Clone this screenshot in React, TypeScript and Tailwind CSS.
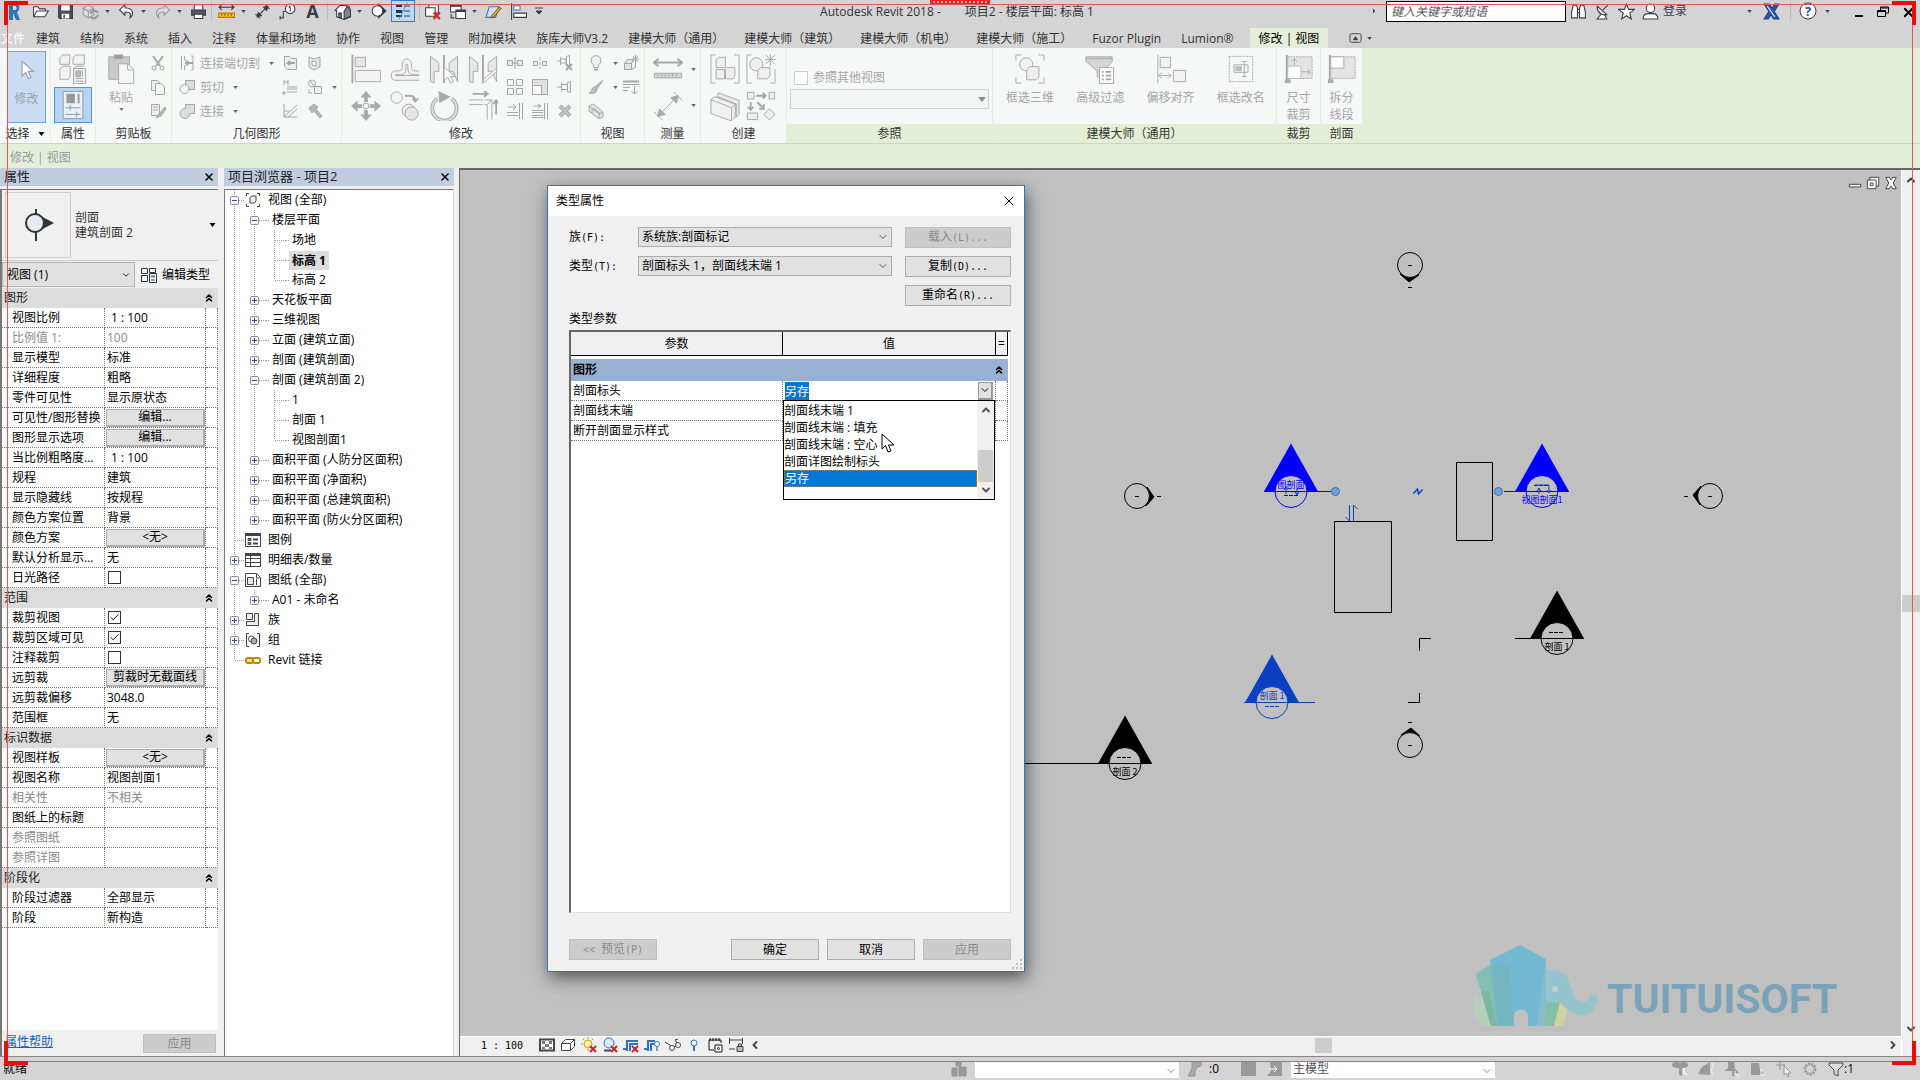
import type { ReactNode } from "react";
import { Check, ChevronDown, ChevronLeft, ChevronRight, ChevronUp, ChevronsUp, X } from "lucide-react";

type IconProps = { children: ReactNode; box?: number; className?: string };

function Icon({ children, box = 16, className = "size-4" }: IconProps) {
  return (
    <svg
      aria-hidden="true"
      className={`shrink-0 ${className}`}
      fill="none"
      stroke="currentColor"
      viewBox={`0 0 ${box} ${box}`}
    >
      {children}
    </svg>
  );
}

function Caret({ className = "h-[3px] w-[5px] text-[#444]" }: { className?: string }) {
  return (
    <svg aria-hidden="true" className={`shrink-0 ${className}`} viewBox="0 0 6 4">
      <path d="M0 0h6L3 4z" fill="currentColor" />
    </svg>
  );
}

const quick = {
  open: <><path d="M1.500 13V3.500h4l1.500 2h5.500V7.500M1.500 13l3-5.500h11L12 13z" fill="#fff" /></>,
  save: <><path d="M1.500 1.500h13v13h-12l-1-1z" fill="#4a4f5c" /><path d="M4 2h8v5H4zM4.500 10h7v4.500h-7z" fill="#fff" stroke="none" /><path d="M6 11h1.500v3H6z" fill="#4a4f5c" stroke="none" /></>,
  sync: <><path d="M1 5l5-3 5 3v6l-5 3-5-3zM1 5l5 3 5-3M6 8v6" fill="#ddd" /><path d="M8 10a4 4 0 017-1M15 11a4 4 0 01-7 2" strokeWidth="2" /></>,
  undo: <path d="M6.500 1.500L1.500 6.500l5 5v-3c4 0 6 .5 5 5.500 3-3 4-9-5-9.500z" fill="#fff" />,
  redo: <path d="M9.500 1.500l5 5-5 5v-3c-4 0-6 .5-5 5.500-3-3-4-9 5-9.500z" fill="#ddd" />,
  print: <><path d="M4 6V1.500h8V6" fill="#fff" /><path d="M1.500 6.500h13v5h-13z" fill="#555b66" /><path d="M4 10.500h8v4H4z" fill="#fff" /></>,
  measure: <><path d="M1 4h14M3.500 1.500L1 4l2.500 2.500M12.500 1.500L15 4l-2.500 2.500" stroke="#333" /><path d="M.5 9.500h15v4H.5z" fill="#ffc21a" stroke="#b97a00" /><path d="M3.500 10v2M6.500 10v2M9.500 10v2M12.500 10v2" stroke="#7a5200" /></>,
  dim: <><path d="M3 13L13 3M1.500 10.500l4 4M10.500 1.500l4 4" /><path d="M3 13l1-4 3 3zM13 3L9 4l3 3z" fill="currentColor" /></>,
  tag: <><circle cx="10.500" cy="5.500" fill="#fff" r="4.500" /><path d="M10.500 3v5M9 4l1.500-1M1 14h3V8h2M1 12v3.500" /></>,
  house: <><path d="M1 7l5-5 8 1 1.500 4v6l-6 2.500L2.500 13V7z" fill="#fff" /><path d="M9.500 8v7l6-2.500V7l-3-4z" fill="#7d8590" /><path d="M4.500 9.500h2.500v4.500l-2.500-.5z" fill="#4f7fc0" /></>,
  section: <><path d="M8 1l7 6.500L8 14z" fill="#30353f" /><circle cx="7" cy="7.500" fill="#fff" r="5" /></>,
  thin: <><path d="M1 2h6v2H1zM1 7h6v3H1zM1 12h6v2H1z" fill="#2b3440" stroke="none" /><path d="M9 3h6M9 8h6M9 13h6" /><path d="M12 0L4 16" stroke="#3c8be0" /></>,
  closeHidden: <><path d="M4.500 1.500h9v8h-9z" fill="#fff" /><path d="M1.500 4.500h9v8h-9z" fill="#fff" /><path d="M9 9l6 6M15 9l-6 6" stroke="#d22" strokeWidth="2" /></>,
  windows: <><path d="M1.500 1.500h10v7h-10z" fill="#fff" /><path d="M6.500 6.500h9v8h-9z" fill="#fff" /><path d="M6.500 7.500h9M1.500 2.500h10" strokeWidth="2" /><path d="M2 10v4h3" /></>,
  pencil: <><path d="M4 3.500h9l-3 10H1z" fill="#cfe3fa" stroke="#2f73c8" /><path d="M15 5l-7 8-2 1 .5-2.500L13.500 4z" fill="#ffc84a" stroke="#8a6010" /></>,
  align: <><path d="M1.500 0v16" /><path d="M3.500 2.500h6v4h-6z" fill="#fff" stroke="#2f73c8" /><path d="M3.500 9.500h12v4h-12z" fill="#fff" /></>,
  binoculars: <path d="M3 2h3l1 3v9H1.500V9zM13 2h-3L9 5v9h5.500V9zM7 6h2v3H7z" fill="#fff" />,
  dish: <path d="M3 3c0 6 4 9 9 8zM3 3l9 8M8 7l5-5M7 10l-4 5h9l-2-4" fill="#fff" />,
  star: <path d="M8 1l2 5h5.500l-4.500 3.500 1.500 5.500L8 12l-4.500 3L5 9.500.5 6H6z" fill="#fff" />,
  user: <><circle cx="8" cy="5" fill="#fff" r="4" /><path d="M1 15c0-4 3-5 5-5h4c2 0 5 1 5 5z" fill="#fff" /></>,
  exchange: <><path d="M1 1h5l2.500 4L11 1h4l-4.500 7L15 15h-5l-2.500-4L5 15H1l4.500-7z" fill="#2a57b0" stroke="#1b3d86" /><path d="M4 3l7 10" stroke="#fff" /></>,
};

const gray = {
  cut: <><path d="M3 1l7 10M13 1L6 11" strokeWidth="2" /><circle cx="4" cy="13" r="2" /><circle cx="12" cy="13" r="2" /></>,
  copy: <><path d="M1.500 1.500h6l3 3v7h-9z" fill="#eee" /><path d="M5.500 4.500h6l3 3v8h-9z" fill="#f6f6f6" /></>,
  match: <><path d="M1.500 1.500h8v11h-8z" fill="#eee" /><path d="M3 4h5M3 7h5" /><path d="M15 4l-6 7-3 4 5-2 5-7z" fill="#bbb" /></>,
  cope: <><path d="M2.500 1v14M5.500 1v4l5 3M5.500 15v-4l5-3M14 1v14h-2M12 1h2" /><path d="M14 8H7m2-2L7 8l2 2" strokeWidth="2" /></>,
  cutGeo: <><path d="M6.500 1.500h9v9h-9z" fill="#ddd" /><circle cx="5.500" cy="10" fill="#f6f6f6" r="4.500" /></>,
  join: <path d="M6.500 1.500h9v9H11a5 5 0 11-4.500-5z" fill="#ddd" />,
  wall: <><path d="M2.500 1.500h5l2 2h5v11h-9l-3-3z" fill="#eee" /><path d="M13 8H6l2-2M6 8l2 2" strokeWidth="2" /></>,
  splitFace: <><path d="M2 2l5 2 6-2v10l-6 3-5-3z" fill="#e5e5e5" /><path d="M5 6l4 1v4l-4-1z" fill="#fff" /></>,
  beam: <path d="M2 1v5M6 1v5M2 3h4M5 8h10M5 10h10M5 13h10M2 12v4M0 14h4" />,
  paintFace: <><circle cx="5" cy="4.500" r="3.500" /><path d="M3 2l4 5" /><path d="M7.500 7.500h7v7h-7z" fill="#eee" /><path d="M2 10v4h3" /></>,
  demolish: <><path d="M2 1v13h13M2 14L15 2M6 14l9-8" /><path d="M2 8h5" /></>,
  hammer: <path d="M2 5l5-4 4 3-2 2 6 7-2 2-6-7-2 2z" fill="#b5b5b5" />,
  splitSolid: <><path d="M8 2v12" /><path d="M.5 5.500h5v5h-5zM10.500 5.500h5v5h-5z" fill="#e5e5e5" /><path d="M5.500 8h5" /></>,
  split: <><path d="M8 2v12" strokeDasharray="3 2" /><path d="M1.500 6.500h4v4h-4zM10.500 6.500h4v4h-4z" fill="#eee" /></>,
  array: <path d="M.5.500h6v6h-6zM9.500.500h6v6h-6zM.5 9.500h6v6h-6zM9.500 9.500h6v6h-6z" fill="#f6f6f6" />,
  scale: <><path d="M.5.500h15v15h-15z" fill="#e0e0e0" /><path d="M.5 6.500h9v9h-9z" fill="#f8f8f8" /></>,
  pin: <path d="M0 8h4M4.500 3.500v9M5 5.500h5M5 10.500h5M10.500 3.500l3-1v11l-3-1z" fill="#f0f0f0" />,
  unpin: <><path d="M0 6h3M3.500 2v8M4 4h5v4H4M9.500 1.500l3-1v11l-3-1z" /><path d="M9 9l6 6M15 9l-6 6" strokeWidth="2" /></>,
  trim: <><path d="M1 4h8m-3-3l3 3-3 3" /><path d="M12.500 0v16M15.500 0v16M0 9.500h11M0 12.500h11" /></>,
  trimMany: <><path d="M1 3h8m-3-2l3 2-3 2" /><path d="M12.500 0v16M15.500 0v16M0 7.500h11M0 9.500h11M0 12.500h11M0 14.500h11" /></>,
  del: <><path d="M3 3l10 10M13 3L3 13" strokeWidth="4" /><path d="M3 3l10 10M13 3L3 13" stroke="#c4c4c4" strokeWidth="2" /></>,
  bulb: <><path d="M8 .5a5 5 0 00-3 9l1 3h4l1-3a5 5 0 00-3-9z" fill="#eee" /><path d="M6 14.500h4" strokeWidth="2" /></>,
  brush: <path d="M15 1L7 8c-4 0-2 4-6 6 5 1 8 0 8-4z" fill="#bbb" />,
  boxLong: <path d="M1 3l4-2 10 8v5l-4 2-10-8zM1 3l10 8v5M11 11l4-2M4 6v4M5 5l8 6" fill="#e5e5e5" />,
  explode: <><path d="M1.500 8.500h7v6h-7zM1.500 8.500l3-4h6l-2 4M12.500 7.500v5l-4 2" fill="#e5e5e5" /><path d="M12.500 0v8M9 4h7M10 1l5 6M15 1l-5 6" /></>,
  lines: <><path d="M0 2.500h16" strokeWidth="2" /><path d="M0 5.500h16M0 8.500h7M0 11.500h5M11.500 7v8m-3-3l3 3 3-3" /></>,
};

const big = {
  typeProps: <><path d="M2 4l3-3h8l-1 10H2zM16 4l3-3h9v10H16zM2 16l3-3h8v11l-2 3H2zM16 16l3-3h9" fill="#f2f2f2" /><path d="M16.500 15.500h13v16h-13z" fill="#eee" /><path d="M19 18h5v6h-5z" fill="#bdbdbd" /><path d="M26 18v6M19 26h8M19 29h8" /></>,
  props: <><path d="M5.500 1.500h21v29h-21z" fill="#eaf1f9" /><path d="M9 4h9v10H9zM21 4h2v10h-2z" fill="#999" stroke="none" /><path d="M8 19h16M8 26h16M13 16v6M20 23v6" /></>,
  paste: <><path d="M3 3h22v24H3z" fill="#c9c9c9" /><path d="M9 1h9v4H9z" fill="#999" /><path d="M13.500 10.500h10l6 6v15h-16z" fill="#f6f6f6" /><path d="M23 11v6h6" /></>,
  align: <><path d="M1.500 1v30" strokeWidth="2" /><path d="M4.500 3.500h11v10h-11z" fill="#e6e6e6" /><path d="M4.500 17.500h27v12h-27z" fill="#f2f2f2" /></>,
  offset: <path d="M31 28H5c-5 0-5-10 0-10h5c3 0 3-4 3-6 0-9 10-9 10 0 0 3 0 6 4 6h4M31 23H7c-2 0-2-1-1-1h6c5 0 5-5 5-9 0-3 2-3 2 0 0 4 0 9 6 9h6" fill="#f2f2f2" />,
  mirrorPick: <><path d="M1.500 2.500l9 7v9h-5v12l-4-1zM30.500 2.500l-9 7v9h4l5 11z" fill="#e6e6e6" /><path d="M16 1v30" strokeWidth="2" /><path d="M16 14v14l4-3 3 6 3-2-3-5h5z" fill="#fff" /></>,
  mirrorDraw: <><path d="M1.500 2.500l9 7v9h-5v12l-4-1zM30.500 2.500l-9 7v9h4l5 11z" fill="#e6e6e6" /><path d="M16 1v30" strokeWidth="2" /><path d="M31 18L19 29l-4 2 2-4 12-11z" fill="#fff" /></>,
  move: <><path d="M16 0l6 7h-4v5h-4V7h-4zM16 32l6-7h-4v-5h-4v5h-4zM0 16l7-6v4h5v4H7v4zM32 16l-7-6v4h-5v4h5v4z" fill="#aaa" stroke="none" /><path d="M13.500 13.500h5v5h-5z" fill="#fff" /></>,
  copy: <><circle cx="7" cy="7" fill="#f6f6f6" r="6" /><circle cx="20" cy="21" fill="#eee" r="7" /><circle cx="23" cy="24" fill="#e5e5e5" r="7" /><path d="M16 5h5c4 0 6 2 6 6m-3-3l3 3 3-3" strokeWidth="2" /></>,
  rotate: <><path d="M9 8a13 13 0 1015 0" stroke="#a4a4a4" strokeWidth="4" /><path d="M9 8a13 13 0 1015 0" stroke="#ddd" strokeWidth="2" /><path d="M10 0l13 6-12 7z" fill="#aaa" stroke="none" /></>,
  trim: <><path d="M1 9.500h15M1 14.500h15M17.500 9.500h8v21M17.500 14.500h3v16M25.500 9.500l-5 5" /><path d="M5 3h16m-4-3l4 3-4 3M30 25V10m-3 4l3-4 3 4" strokeWidth="2" /></>,
  ruler: <><path d="M1 9h30M6 5L1 9l5 4M26 5l5 4-5 4" strokeWidth="2" /><path d="M1.500 20.500h29v5h-29z" fill="#d5d5d5" /><path d="M5 21v3M9 21v3M13 21v3M17 21v3M21 21v3M25 21v3" /></>,
  dim: <><path d="M5 27L27 5M1 22l9 9M22 1l9 9" /><path d="M5 27l2-8 6 6zM27 5l-8 2 6 6z" fill="#aaa" /></>,
  group: <><path d="M6 1H1v30h5M26 1h5v30h-5" /><path d="M6.500 6.500l3-3h7v11h-10zM6.500 16.500h9v10h-9zM16.500 16.500l2-2h8v9l-2 3h-8z" fill="#eee" /></>,
  similar: <><path d="M6 1H1v30h5M26 31h5V16" /><circle cx="11" cy="11" fill="#eee" r="7" /><path d="M12.500 17.500l3-3h10v9l-3 3h-10z" fill="#eee" /><path d="M26 0v13M20 6h12M21 1l10 10M31 1L21 11" /></>,
  assembly: <><path d="M9 2l22 8v15l-3 3V14L8 6z" fill="#e8e8e8" /><path d="M5 6l22 8v14l-3 2" fill="#eee" /><path d="M1 9l22 9v14L1 24zM1 9l4-3M23 18l4-4" fill="#f2f2f2" /></>,
  convert: <><path d="M1.500 1.500h7v7h-7zM24.500 1.500h6v7h-6zM1.500 23.500h11v7h-11zM25 19l6 6-6 6-6-6z" fill="#eee" /><path d="M11 5h10m-3-3l3 3-3 3M5 12v8m-3-3l3 3 3-3M12 12l7 7m0-5v5h-5" strokeWidth="2" /></>,
  box3d: <><path d="M7 1H1v6M25 1h6v6M7 31H1v-6M25 31h6v-6" /><circle cx="12" cy="11" fill="#f2f2f2" r="7" /><path d="M12.500 16.500l3-3h10v11l-3 3h-10z" fill="#eee" /></>,
  filter: <><path d="M1 3h28v5l-9 10v10l-7-4v-6L1 8z" fill="#d5d5d5" /><path d="M1 5h28" /><path d="M15.500 14.500h15v17h-15z" fill="#fff" /><path d="M18 19h2M18 23h2M18 27h2M22 19h6M22 23h6M22 27h6" strokeWidth="2" /></>,
  offsetAlign: <><path d="M2 1v30" /><path d="M4.500 3.500h11v11h-11zM18.500 17.500h13v12h-13z" fill="#f2f2f2" /><path d="M3 23h13M6 20l-3 3 3 3M13 20l3 3-3 3" /></>,
  rename: <><path d="M3.500 2.500h25v27h-25z" strokeDasharray="2 1" /><path d="M8.500 11.500h15v8h-15zM17 8h5M19.500 9v15M17 24h5" /><path d="M10 13h7v5h-7z" fill="#bbb" stroke="none" /></>,
  crop: <><path d="M3 1v28" strokeWidth="2" /><path d="M4 3h26v23H4z" fill="#e4e4e4" strokeDasharray="2 1" /><path d="M4 13h14v13H4z" fill="#fff" strokeDasharray="2 1" /><path d="M11 12V5m-3 3l3-3 3 3M19 19h9m-3-3l3 3-3 3" /><path d="M1 27h6v4H1z" fill="#aaa" stroke="none" /></>,
  segment: <><path d="M3 1v28" strokeWidth="2" /><path d="M4 3h26v23H4z" fill="#e4e4e4" strokeDasharray="2 1" /><path d="M4 3h14v12H4z" fill="#fff" /><path d="M1 27h6v4H1z" fill="#aaa" stroke="none" /></>,
};

function QuickButton({ label, icon, caret, muted }: { label: string; icon: ReactNode; caret?: boolean; muted?: boolean }) {
  return (
    <button aria-label={label} className={`flex items-center gap-[6px] ${muted ? "text-[#999]" : "text-[#383d48]"}`} type="button">
      <Icon className="size-[17px]">{icon}</Icon>
      {caret && <Caret />}
    </button>
  );
}

function TitleBar() {
  return (
    <header className="flex h-7 items-start bg-[#d4d4d4] pl-2 text-xs text-[#383d48]">
      <div className="flex h-[22px] items-center">
        <svg aria-label="Revit" className="mr-3 h-5 w-3" role="img" viewBox="0 0 12 20">
          <path d="M1 2h6c5 0 6 7 2 9l3 8H8L5 12v7H1z" fill="#2f76b5" />
          <path d="M5 5h2c2 0 2 4 0 4H5z" fill="#d4e6f5" />
        </svg>
        <div className="flex items-center gap-2">
          <QuickButton icon={quick.open} label="打开" />
          <QuickButton icon={quick.save} label="保存" />
          <QuickButton caret icon={quick.sync} label="同步" muted />
          <QuickButton caret icon={quick.undo} label="放弃" />
          <QuickButton caret icon={quick.redo} label="重做" muted />
          <QuickButton icon={quick.print} label="打印" />
        </div>
        <div className="ml-1 flex items-center gap-2 border-l border-[#bbb] pl-[6px]">
          <QuickButton caret icon={quick.measure} label="测量" />
          <QuickButton icon={quick.dim} label="对齐尺寸标注" />
          <QuickButton icon={quick.tag} label="按类别标记" />
          <button aria-label="文字" className="w-[17px] font-['Open_Sans'] text-lg leading-5 font-bold" type="button">A</button>
        </div>
        <div className="ml-[6px] flex items-center gap-2 border-l border-[#bbb] pl-[6px]">
          <QuickButton caret icon={quick.house} label="默认三维视图" />
          <QuickButton icon={quick.section} label="剖面" />
        </div>
        <button aria-label="细线" className="ml-1 flex h-[22px] w-6 items-center justify-center border border-[#2f7bd0] bg-[#b9d9f5]" type="button">
          <Icon>{quick.thin}</Icon>
        </button>
        <div className="ml-1 flex items-center gap-2 border-l border-[#bbb] pl-1">
          <QuickButton icon={quick.closeHidden} label="关闭隐藏窗口" />
          <QuickButton caret icon={quick.windows} label="切换窗口" />
          <QuickButton icon={quick.pencil} label="编辑" />
          <QuickButton icon={quick.align} label="对齐" />
          <Icon className="size-2" box={8}>
            <path d="M0 1h8M1 4h6L4 7z" fill="currentColor" />
          </Icon>
        </div>
      </div>
      <h1 className="ml-auto flex h-6 items-center gap-6 text-[#333]">
        <span>Autodesk Revit 2018 -</span>
        <span>项目2 - 楼层平面: 标高 1</span>
      </h1>
      <div className="ml-[276px] flex h-[22px] items-center gap-2">
        <ChevronRight aria-hidden="true" className="size-2" fill="currentColor" />
        <input
          aria-label="搜索"
          className="h-[21px] w-[180px] border border-black bg-white px-1 text-xs italic placeholder:text-[#555]"
          placeholder="键入关键字或短语"
        />
        <div className="-ml-1 flex items-center gap-[7px]">
          <QuickButton icon={quick.binoculars} label="搜索" />
          <QuickButton icon={quick.dish} label="通讯中心" />
          <QuickButton icon={quick.star} label="收藏夹" />
          <button className="flex items-center gap-1" type="button">
            <Icon className="size-[17px]">{quick.user}</Icon>
            登录
          </button>
        </div>
        <div className="ml-[52px] flex items-center gap-[11px]">
          <Caret />
          <QuickButton icon={quick.exchange} label="Exchange Apps" />
        </div>
        <button aria-label="帮助" className="ml-[2px] flex items-center gap-2 border-l border-[#bbb] pl-2" type="button">
          <svg aria-hidden="true" className="size-[18px]" viewBox="0 0 18 18">
            <circle cx="9" cy="9" fill="#fff" r="8" stroke="#333b55" />
            <text fill="#2450b0" fontFamily="Open Sans" fontSize="13" fontWeight="700" textAnchor="middle" x="9" y="14">?</text>
          </svg>
          <Caret />
        </button>
      </div>
      <div className="mr-1 ml-[23px] flex h-6 items-center gap-3 text-black">
        <button aria-label="最小化" type="button"><Icon className="size-3" box={12}><path d="M2 10h8" strokeWidth="2" /></Icon></button>
        <button aria-label="还原" type="button"><Icon className="size-3" box={12}><path d="M3.500 4V1h8v6H9M.5 4.500h8v6h-8zM.5 5.500h8M3.500 2h8" /></Icon></button>
        <button aria-label="关闭" type="button"><X aria-hidden="true" className="size-[15px]" strokeWidth={3} /></button>
      </div>
    </header>
  );
}

const tabs = [
  "建筑", "结构", "系统", "插入", "注释", "体量和场地", "协作", "视图", "管理", "附加模块", "族库大师V3.2",
  "建模大师（通用）", "建模大师（建筑）", "建模大师（机电）", "建模大师（施工）", "Fuzor Plugin", "Lumion®",
];

function Tabs() {
  return (
    <nav className="flex h-5 items-center bg-[#d4d4d4] text-xs whitespace-nowrap text-[#333]">
      <a className="w-9 pt-[2px] pl-px text-white" href="#file">文件</a>
      <div className="flex items-center gap-5 pt-[2px]">
        {tabs.map((tab) => (
          <a href={`#${tab}`} key={tab}>{tab}</a>
        ))}
      </div>
      <a aria-current="page" className="ml-4 flex h-5 items-center bg-[#e4efd9] px-[9px] pt-[2px] text-black" href="#modify">
        修改 | 视图
      </a>
      <button aria-label="显示选项" className="ml-5 flex items-center gap-1" type="button">
        <Icon className="h-3 w-[15px]" box={14}><rect height="10" rx="2" width="13" x=".5" y="2" /><path d="M4.500 9h5L7 5.500z" fill="currentColor" /></Icon>
        <Caret />
      </button>
    </nav>
  );
}

function Panel({ title, width, green, children }: { title: ReactNode; width: string; green?: boolean; children: ReactNode }) {
  return (
    <section className={`flex shrink-0 flex-col border-r border-[#e8eee0] ${width}`}>
      <div className="flex h-[76px] bg-[#f6f7f7] pt-[3px] text-xs text-[#a6a6a6]">{children}</div>
      <h2 className={`flex h-[19px] items-center justify-center gap-2 text-xs text-[#333] ${green ? "bg-[#e2eed6]" : "bg-[#f6f7f7]"}`}>
        {title}
      </h2>
    </section>
  );
}

function Small({ label, icon, text, caret }: { label: string; icon: ReactNode; text?: boolean; caret?: boolean }) {
  return (
    <button aria-label={label} className="flex h-6 items-center gap-[5px]" disabled type="button">
      <Icon>{icon}</Icon>
      {text && <span className="pt-px">{label}</span>}
      {caret && <Caret className="ml-1 h-[3px] w-[5px] text-[#666]" />}
    </button>
  );
}

function SmallColumn({ width, items }: { width: string; items: [string, ReactNode, boolean?][] }) {
  return (
    <div className={`flex flex-col pl-1 ${width}`}>
      {items.map(([label, icon, caret]) => (
        <Small caret={caret} icon={icon} key={label} label={label} />
      ))}
    </div>
  );
}

function Big({ label, icon }: { label: string; icon: ReactNode }) {
  return (
    <button aria-label={label} className="flex h-9 items-center justify-center" disabled type="button">
      <Icon box={32} className="size-[30px]">{icon}</Icon>
    </button>
  );
}

function Captioned({ lines, icon }: { lines: string[]; icon: ReactNode }) {
  return (
    <button className="flex flex-1 flex-col items-center" disabled type="button">
      <Icon box={32} className="mt-[3px] mb-[5px] size-[30px]">{icon}</Icon>
      {lines.map((line) => (
        <span className="leading-[17px] whitespace-nowrap" key={line}>{line}</span>
      ))}
    </button>
  );
}

function Ribbon() {
  return (
    <div className="flex h-24 border-b border-[#cfd4ca] bg-[#e4efd9]">
      <Panel title={<>选择 <Caret className="h-1 w-[7px] text-black" /></>} width="w-[51px]">
        <button className="ml-[7px] flex h-[72px] w-[39px] flex-col items-center border border-[#6ea6dc] bg-[#c9dcf1] pt-2 text-[#9aa3ae]" type="button">
          <Icon className="size-5"><path d="M4 1v12l3-3 2 5 2-1-2-5h4z" fill="#fff" /></Icon>
          <span className="mt-[11px]">修改</span>
        </button>
      </Panel>
      <Panel title="属性" width="w-[45px]">
        <div className="flex flex-col items-center pl-[3px]">
          <Big icon={big.typeProps} label="类型属性" />
          <button aria-label="属性" className="flex h-9 w-[38px] items-center justify-center border border-[#4f94dc] bg-[#b7d4f2] text-[#8b96a3]" type="button">
            <Icon box={32} className="size-[30px]">{big.props}</Icon>
          </button>
        </div>
      </Panel>
      <Panel title="剪贴板" width="w-[76px]">
        <button className="flex w-[50px] flex-col items-center" disabled type="button">
          <Icon box={32} className="mt-[3px] mb-[5px] size-[30px]">{big.paste}</Icon>
          <span className="leading-[17px]">粘贴</span>
          <Caret className="mt-[2px] h-[3px] w-[5px] text-[#777]" />
        </button>
        <SmallColumn items={[["剪切到剪贴板", gray.cut], ["复制到剪贴板", gray.copy], ["匹配类型", gray.match]]} width="w-6" />
      </Panel>
      <Panel title="几何图形" width="w-[170px]">
        <div className="w-[106px] pl-[7px]">
          <Small caret icon={gray.cope} label="连接端切割" text />
          <Small caret icon={gray.cutGeo} label="剪切" text />
          <Small caret icon={gray.join} label="连接" text />
        </div>
        <SmallColumn items={[["墙连接", gray.wall], ["梁连接", gray.beam], ["拆除线", gray.demolish]]} width="w-[25px]" />
        <SmallColumn items={[["拆分面", gray.splitFace], ["填色", gray.paintFace, true], ["拆除", gray.hammer]]} width="w-[37px]" />
      </Panel>
      <Panel title="修改" width="w-[239px]">
        <div className="grid w-[161px] grid-cols-4 pl-1">
          <Big icon={big.align} label="对齐" />
          <Big icon={big.offset} label="偏移" />
          <Big icon={big.mirrorPick} label="镜像 - 拾取轴" />
          <Big icon={big.mirrorDraw} label="镜像 - 绘制轴" />
          <Big icon={big.move} label="移动" />
          <Big icon={big.copy} label="复制" />
          <Big icon={big.rotate} label="旋转" />
          <Big icon={big.trim} label="修剪为角" />
        </div>
        <SmallColumn items={[["拆分图元", gray.splitSolid], ["阵列", gray.array], ["修剪单个", gray.trim]]} width="w-[25px]" />
        <SmallColumn items={[["用间隙拆分", gray.split], ["缩放", gray.scale], ["修剪多个", gray.trimMany]]} width="w-[25px]" />
        <SmallColumn items={[["解锁", gray.unpin], ["锁定", gray.pin], ["删除", gray.del]]} width="w-[25px]" />
      </Panel>
      <Panel title="视图" width="w-16">
        <div className="flex pl-[3px]">
          <SmallColumn items={[["隐藏", gray.bulb, true], ["替换", gray.brush, true], ["选择框", gray.boxLong]]} width="w-[35px]" />
          <SmallColumn items={[["置换图元", gray.explode], ["线处理", gray.lines]]} width="w-6" />
        </div>
      </Panel>
      <Panel title="测量" width="w-14">
        <div className="grid grid-cols-[38px_10px] items-center pl-1">
          <Big icon={big.ruler} label="测量距离" />
          <Caret className="ml-1 h-[3px] w-[5px] text-[#666]" />
          <Big icon={big.dim} label="尺寸标注" />
          <Caret className="ml-1 h-[3px] w-[5px] text-[#666]" />
        </div>
      </Panel>
      <Panel title="创建" width="w-[86px]">
        <div className="grid grid-cols-[36px_36px] pl-[6px]">
          <Big icon={big.group} label="创建组" />
          <Big icon={big.similar} label="创建类似" />
          <Big icon={big.assembly} label="创建部件" />
          <Big icon={big.convert} label="创建零件" />
        </div>
      </Panel>
      <Panel green title="参照" width="w-[206px]">
        <div className="flex flex-1 flex-col px-[3px] pt-[18px]">
          <label className="flex items-center gap-[5px] pl-1 leading-[17px]">
            <input className="size-[14px] appearance-none border border-[#ccc] bg-white" disabled type="checkbox" />
            参照其他视图
          </label>
          <div className="relative mt-[3px]">
            <select aria-label="参照视图" className="h-5 w-full appearance-none border border-[#d3d3d3] bg-[#f2f3f3]" disabled />
            <Caret className="absolute top-2 right-[3px] h-[5px] w-2 text-[#888]" />
          </div>
        </div>
      </Panel>
      <Panel green title="建模大师（通用）" width="w-[284px]">
        <div className="flex flex-1 pl-[2px]">
          <Captioned icon={big.box3d} lines={["框选三维"]} />
          <Captioned icon={big.filter} lines={["高级过滤"]} />
          <Captioned icon={big.offsetAlign} lines={["偏移对齐"]} />
          <Captioned icon={big.rename} lines={["框选改名"]} />
        </div>
      </Panel>
      <Panel green title="裁剪" width="w-11">
        <Captioned icon={big.crop} lines={["尺寸", "裁剪"]} />
      </Panel>
      <Panel green title="剖面" width="w-[42px]">
        <Captioned icon={big.segment} lines={["拆分", "线段"]} />
      </Panel>
    </div>
  );
}

type PropRow = { label: string; value?: string; kind?: "button" | "check" | "gray" | "ratio"; checked?: boolean };

const propertyGroups: { title: string; rows: PropRow[] }[] = [
  {
    title: "图形",
    rows: [
      { label: "视图比例", value: "1 : 100", kind: "ratio" },
      { label: "比例值 1:", value: "100", kind: "gray" },
      { label: "显示模型", value: "标准" },
      { label: "详细程度", value: "粗略" },
      { label: "零件可见性", value: "显示原状态" },
      { label: "可见性/图形替换", value: "编辑...", kind: "button" },
      { label: "图形显示选项", value: "编辑...", kind: "button" },
      { label: "当比例粗略度...", value: "1 : 100", kind: "ratio" },
      { label: "规程", value: "建筑" },
      { label: "显示隐藏线", value: "按规程" },
      { label: "颜色方案位置", value: "背景" },
      { label: "颜色方案", value: "<无>", kind: "button" },
      { label: "默认分析显示...", value: "无" },
      { label: "日光路径", kind: "check" },
    ],
  },
  {
    title: "范围",
    rows: [
      { label: "裁剪视图", kind: "check", checked: true },
      { label: "裁剪区域可见", kind: "check", checked: true },
      { label: "注释裁剪", kind: "check" },
      { label: "远剪裁", value: "剪裁时无截面线", kind: "button" },
      { label: "远剪裁偏移", value: "3048.0" },
      { label: "范围框", value: "无" },
    ],
  },
  {
    title: "标识数据",
    rows: [
      { label: "视图样板", value: "<无>", kind: "button" },
      { label: "视图名称", value: "视图剖面1" },
      { label: "相关性", value: "不相关", kind: "gray" },
      { label: "图纸上的标题" },
      { label: "参照图纸", kind: "gray" },
      { label: "参照详图", kind: "gray" },
    ],
  },
  {
    title: "阶段化",
    rows: [
      { label: "阶段过滤器", value: "全部显示" },
      { label: "阶段", value: "新构造" },
    ],
  },
];

function PropValue({ row }: { row: PropRow }) {
  if (row.kind === "button") {
    return (
      <button className="flex h-[18px] w-[99px] items-center justify-center border border-r-2 border-b-2 border-[#adadad] bg-[#e1e1e1] whitespace-nowrap" type="button">
        {row.value}
      </button>
    );
  }
  if (row.kind === "check") {
    return (
      <span className="ml-[2px] grid size-[13px]">
        <input aria-label={row.label} className="col-start-1 row-start-1 size-[13px] appearance-none border border-[#333] bg-white" defaultChecked={row.checked} type="checkbox" />
        {row.checked && <Check aria-hidden="true" className="pointer-events-none col-start-1 row-start-1 m-px size-[11px]" />}
      </span>
    );
  }
  return <span className={row.kind === "ratio" ? "pl-[5px]" : "pl-px"}>{row.value}</span>;
}

function PanelHeader({ title }: { title: string }) {
  return (
    <div className="mb-[3px] flex h-[18px] items-center justify-between bg-[#bfcddf] pr-[3px] pl-1 text-[13px] text-[#222]">
      <h2>{title}</h2>
      <button aria-label={`关闭${title}`} type="button"><X aria-hidden="true" className="size-3 text-black" strokeWidth={3} /></button>
    </div>
  );
}

function Properties() {
  return (
    <aside className="mr-[6px] flex w-[218px] shrink-0 flex-col text-xs">
      <PanelHeader title="属性" />
      <div className="flex flex-1 flex-col border-t border-l-2 border-[#777] bg-white">
        <div className="flex h-[71px] items-center border-b border-[#ccc] bg-[#f0f0f0] pl-[3px]">
          <div className="flex size-[66px] items-center justify-center border border-[#ccc]">
            <svg aria-hidden="true" className="ml-[6px] size-8" viewBox="0 0 32 32">
              <path d="M12 0v5l17 9-17 9v9h-2V0z" fill="#30343e" />
              <circle cx="10" cy="14" fill="#e8ebee" r="9" stroke="#30343e" strokeWidth="2" />
            </svg>
          </div>
          <p className="ml-1 leading-[15px] text-[#333]">剖面<br />建筑剖面 2</p>
          <Caret className="mr-[2px] ml-auto h-1 w-[7px]" />
        </div>
        <div className="flex h-[27px] items-center bg-[#f0f0f0]">
          <div className="relative">
            <select aria-label="实例" className="h-[25px] w-[133px] appearance-none border border-[#b3b3b3] bg-[#e1e1e1] pl-1">
              <option>视图 (1)</option>
            </select>
            <ChevronDown aria-hidden="true" className="pointer-events-none absolute top-2 right-1 size-[10px]" />
          </div>
          <button className="ml-[6px] flex items-center gap-[5px]" type="button">
            <Icon className="size-4 text-[#333]"><path d="M.5 1.500h6v5h-6zM8.500 1.500h6v4h-6zM.5 8.500h6v6h-6z" fill="#f4f4f4" /><path d="M8.500 6.500h7v9h-7z" fill="#fff" /><path d="M10 8.500h4v2h-4z" fill="#3a75c4" stroke="none" /><path d="M10 13h4" /></Icon>
            编辑类型
          </button>
        </div>
        <table className="w-full table-fixed border-separate border-spacing-0">
          <colgroup><col className="w-[103px]" /><col className="w-[101px]" /><col /></colgroup>
          {propertyGroups.map((group) => (
            <tbody key={group.title}>
              <tr className="h-5 bg-[#dcdcdc]">
                <th className="h-5 p-0 pl-[2px] text-left font-normal text-[#222]" colSpan={2} scope="colgroup">{group.title}</th>
                <td className="p-0"><ChevronsUp aria-hidden="true" className="-ml-[3px] size-3" strokeWidth={3} /></td>
              </tr>
              {group.rows.map((row) => (
                <tr className={row.kind === "gray" ? "text-[#8a8a8a]" : "text-black"} key={row.label}>
                  <th className="h-5 border-r border-b border-dotted border-[#777] p-0 pl-[10px] text-left leading-4 font-normal whitespace-nowrap" scope="row">{row.label}</th>
                  <td className="h-5 border-r border-b border-dotted border-[#777] p-0 pl-px leading-4"><PropValue row={row} /></td>
                  <td className="border-r border-b border-dotted border-[#777] p-0" />
                </tr>
              ))}
            </tbody>
          ))}
        </table>
        <div className="mt-auto flex h-[26px] items-start justify-between bg-[#f0f0f0] pt-1 pr-[2px] pl-[3px]">
          <a className="text-[#1763b5] underline" href="#help">属性帮助</a>
          <button className="h-[19px] w-[73px] border border-[#bfbfbf] bg-[#ccc] leading-4 text-[#888]" disabled type="button">应用</button>
        </div>
      </div>
    </aside>
  );
}

const treeIcons = {
  view: <><path d="M4 1.500H1.500V4M12 1.500h2.500V4M4 14.500H1.500V12M12 14.500h2.500V12" /><path d="M5 6l1.500-2H11v5l-1.500 2H5z" fill="#eee" /></>,
  legend: <><path d="M.5 1.500h15v13H.5z" fill="#fff" /><path d="M0 2.500h16" strokeWidth="3" /><path d="M3 6.500h3v2H3zM3 10.500h3v2H3z" fill="#888" /><path d="M8 7.500h5M8 11.500h5" strokeWidth="2" /></>,
  schedule: <><path d="M.5 1.500h15v13H.5zM.5 6.500h15M.5 10.500h15M5.500 3v11" fill="#fff" /><path d="M0 2.500h16" strokeWidth="3" /></>,
  sheet: <><path d="M.5 1.500h11l4 4v9H.5z" fill="#fff" /><path d="M2.500 5.500h6v7h-6zM11.500 7v6" fill="#dde8f5" /><path d="M11.500 2v4h4" /></>,
  family: <><path d="M1.500 1.500h6v6h-6z" fill="#eee" /><path d="M9.500 1.500h4v12h-12v-4h8z" fill="#eee" /></>,
  group: <><path d="M4 1.500H1.500v13H4M12 1.500h2.500v13H12" /><circle cx="6.500" cy="7" r="3" /><circle cx="9" cy="9" fill="#aaa" r="3" /></>,
  link: <><rect fill="#ffe08a" height="5" rx="2" stroke="#b88a00" strokeWidth="2" width="7" x="1" y="6" /><rect height="5" rx="2" stroke="#b88a00" strokeWidth="2" width="7" x="8" y="6" /></>,
};

// one guide character per 20px column: | through, T tee, L corner, + and - boxes, p last box
const tree: { guides: string; text: string; icon?: ReactNode; current?: boolean }[] = [
  { guides: "-", text: "视图 (全部)", icon: treeIcons.view },
  { guides: "|-", text: "楼层平面" },
  { guides: "||T", text: "场地" },
  { guides: "||T", text: "标高 1", current: true },
  { guides: "||L", text: "标高 2" },
  { guides: "|+", text: "天花板平面" },
  { guides: "|+", text: "三维视图" },
  { guides: "|+", text: "立面 (建筑立面)" },
  { guides: "|+", text: "剖面 (建筑剖面)" },
  { guides: "|-", text: "剖面 (建筑剖面 2)" },
  { guides: "||T", text: "1" },
  { guides: "||T", text: "剖面 1" },
  { guides: "||L", text: "视图剖面1" },
  { guides: "|+", text: "面积平面 (人防分区面积)" },
  { guides: "|+", text: "面积平面 (净面积)" },
  { guides: "|+", text: "面积平面 (总建筑面积)" },
  { guides: "|p", text: "面积平面 (防火分区面积)" },
  { guides: "T", text: "图例", icon: treeIcons.legend },
  { guides: "+", text: "明细表/数量", icon: treeIcons.schedule },
  { guides: "-", text: "图纸 (全部)", icon: treeIcons.sheet },
  { guides: "|p", text: "A01 - 未命名" },
  { guides: "+", text: "族", icon: treeIcons.family },
  { guides: "+", text: "组", icon: treeIcons.group },
  { guides: "L", text: "Revit 链接", icon: treeIcons.link },
];

function Guide({ kind }: { kind: string }) {
  const boxed = "+-p".includes(kind);

  return (
    <svg aria-hidden="true" className="size-5 shrink-0" fill="none" viewBox="0 0 20 20">
      <path d={"Lp".includes(kind) ? "M9.500 0v10" : "M9.500 0v20"} stroke="#999" strokeDasharray="1 1" />
      {kind !== "|" && <path d="M10 10.500h10" stroke="#999" strokeDasharray="1 1" />}
      {boxed && <rect fill="#f4f4f4" height="8" rx="1" stroke="#8c8c8c" width="8" x="5.500" y="6.500" />}
      {boxed && <path d={kind === "-" ? "M7 10.500h5" : "M7 10.500h5M9.500 8v5"} stroke="#2b4c9b" />}
    </svg>
  );
}

function Browser() {
  return (
    <aside className="mr-[5px] flex w-[230px] shrink-0 flex-col text-xs">
      <PanelHeader title="项目浏览器 - 项目2" />
      <ul className="flex-1 border border-b-0 border-[#777] border-r-[#ddd] bg-white">
        {tree.map((node, index) => (
          <li className="flex h-5 items-center whitespace-nowrap" key={index}>
            {[...node.guides].map((kind, i) => (
              <Guide key={i} kind={kind} />
            ))}
            {node.icon ? <Icon className="mr-1 size-4 text-[#444]">{node.icon}</Icon> : <span className="w-1 border-b border-dotted border-[#999]" />}
            <a className={node.current ? "bg-[#dcdcdc] px-[3px] leading-[19px] font-bold" : "px-[3px]"} href="#view">{node.text}</a>
          </li>
        ))}
      </ul>
    </aside>
  );
}

type MarkProps = { x: number; y: number; color: string; from: number; to: number; above?: string; below?: string };

// section head: solid arrow with a round tag sitting on the cut line
function SectionMark({ x, y, color, from, to, above, below }: MarkProps) {
  return (
    <g fill={color} fontFamily="Noto Sans CJK SC" fontSize="9" stroke="none" textAnchor="middle">
      <path d={`M${x} ${y - 48}L${x + 27} ${y}H${x - 27}z`} />
      <circle cx={x} cy={y} fill="#c0c0c0" r="16" />
      <circle cx={x} cy={y} fill="none" r="16" stroke={color} />
      <path d={`M${from} ${y}H${to}`} stroke={color} />
      {above ? <text x={x} y={y - 4}>{above}</text> : <path d={`M${x - 8} ${y - 6}h14`} stroke={color} strokeDasharray="4 1" />}
      {below ? <text x={x} y={y + 11}>{below}</text> : <path d={`M${x - 7} ${y + 4}h14`} stroke={color} strokeDasharray="4 1" />}
    </g>
  );
}

function ElevationMark({ x, y, turn }: { x: number; y: number; turn: number }) {
  return (
    <g transform={`translate(${x} ${y})`}>
      <g transform={`rotate(${turn})`}>
        <path d="M-10 9L-1 17L9 10z" fill="#000" />
        <circle fill="#c0c0c0" r="12.500" />
      </g>
      {turn % 180 === 0 ? <path d={turn === 0 ? "M-2 22.500h4" : "M-2-22.500h4"} /> : <path d={turn < 0 ? "M20 .5h4" : "M-26 .5h4"} />}
      <path d="M-2 .5h4" />
    </g>
  );
}

function Drawing() {
  return (
    <svg aria-label="楼层平面" className="absolute inset-0 size-full" fill="none" role="img" stroke="#000">
      <g transform="translate(-460 -170)">
        <ElevationMark turn={0} x={1410} y={265} />
        <ElevationMark turn={-90} x={1137} y={496} />
        <ElevationMark turn={90} x={1710} y={496} />
        <ElevationMark turn={180} x={1410} y={745} />
        <path d="M1334.500 521.500h57v91h-57zM1456.500 462.500h36v78h-36z" />
        <path d="M1431 638.500h-11.500v12M1419.500 693v9.500H1408" />
        <SectionMark above="图剖面" color="#0000ff" from={1264} to={1331} x={1291} y={491.5} />
        <SectionMark below="视图剖面1" color="#0000ff" from={1504} to={1569} x={1542} y={491.5} />
        <SectionMark below="剖面 1" color="#000000" from={1515} to={1584} x={1557} y={638.5} />
        <SectionMark above="剖面 1" color="#0a3fc0" from={1244} to={1315} x={1272} y={702.5} />
        <SectionMark below="剖面 2" color="#000000" from={1020} to={1152} x={1125} y={763.5} />
        <g stroke="#0a3fc0">
          <path d="M1286 486v8M1284 490l2-3 2 3M1297 489v6M1295 492l2 3 2-3" />
          <path d="M1539 488v6M1537 491l2-3 2 3M1549 485v7M1547 490l2 3 2-3M1535 485h14" />
          <path d="M1413.500 493.500l4-4.500 1 5 4-4.500" strokeWidth="1.500" />
          <path d="M1349.500 505v16l-4-4M1353.500 521v-16l4 4" />
          <circle cx="1335.500" cy="491.500" fill="#6f9fe0" r="4" stroke="#4a6c96" />
          <circle cx="1498.500" cy="491.500" fill="#6f9fe0" r="4" stroke="#4a6c96" />
        </g>
        <g stroke="none">
          <path d="M1474 996l8 2 9 28h-8c-7-3-11-14-9-30z" fill="#b6cfba" />
          <path d="M1476 974l15-10 14 2-2 60h-12z" fill="#7fbfb6" />
          <path d="M1481 991h8l8 35h-6z" fill="#7ab8a2" />
          <path d="M1546 969l11 1 9 5 8 20c3 9 14 10 16 0h7c2 12-6 20-15 20-9 0-15-5-21-12h-15z" fill="#95c4cc" />
          <path d="M1546 1002l14 1-6 23h-11z" fill="#86bfa5" />
          <path d="M1560 1003l8 7-5 16h-9z" fill="#cdd29f" />
          <path d="M1536 960h10v42l-3 24h-8z" fill="#86bccb" />
          <path d="M1490 960l30-15 26 14-9 67h-9v-9c0-10-14-10-14 0v9h-16z" fill="#74b9d2" />
          <path d="M1491 964l18 1 5 61h-16z" fill="#75b6c0" />
          <circle cx="1555" cy="989" fill="#c8cfd2" r="3" />
          <text fill="#7ba3b8" fontFamily="Roboto, sans-serif" fontSize="41" fontWeight="700" x="1607" y="1013">TUITUISOFT</text>
        </g>
      </g>
    </svg>
  );
}

const viewIcons: [string, ReactNode][] = [
  ["详细程度", <><path d="M1 2.500h14v11H1z" fill="#fff" strokeWidth="2" /><path d="M3 4h3v3H3zM10 4h3v3h-3zM6 7h4v3H6zM3 10h3v2H3zM10 10h3v2h-3z" fill="#777" stroke="none" /></>],
  ["视觉样式", <path d="M1.500 6.500l4-4h9v7l-4 4h-9zM1.500 6.500h9v7M10.500 6.500l4-4" fill="#fff" />],
  ["日光路径", <><circle cx="7" cy="7" fill="#fff3b0" r="4" stroke="#d99b00" /><path d="M7 0v2M7 12v2M0 7h2M2 2l1 1M12 2l-1 1" stroke="#d99b00" /><path d="M9 9l6 6M15 9l-6 6" stroke="#c22" strokeWidth="2" /></>],
  ["阴影", <><circle cx="7" cy="6" fill="#d7e9fb" r="5" stroke="#2f73c8" /><path d="M2 13.500h7" strokeWidth="2" /><path d="M9 9l6 6M15 9l-6 6" stroke="#c22" strokeWidth="2" /></>],
  ["裁剪视图", <><path d="M4 14V4h11M7 14V7h8M0 12h3" stroke="#2f73c8" strokeWidth="2" /><path d="M9 9l6 6M15 9l-6 6" stroke="#c22" strokeWidth="2" /></>],
  ["裁剪区域", <><path d="M4 14V4h7M7 14V7h3M0 12h3" stroke="#2f73c8" strokeWidth="2" /><circle cx="13" cy="7" fill="#fff" r="2.500" stroke="#2f73c8" /><path d="M13 10v4" /></>],
  ["临时隐藏", <><path d="M0 5l5 3 3 4" /><circle cx="7" cy="11" fill="#fff" r="2.500" /><circle cx="13" cy="8" fill="#fff" r="2.500" /><path d="M9 10l2-1M12 6l-2-3 3-1" /></>],
  ["显示隐藏图元", <><circle cx="8" cy="6" fill="#fff" r="3" stroke="#2f73c8" /><path d="M8 9v5" stroke="#2f73c8" strokeWidth="2" /></>],
  ["临时视图属性", <><path d="M2 3h12v3M2 3v10h5M3 1v3M6 1v3M9 1v3M12 1v3" stroke="#111" /><path d="M8 8h7v7H8z" fill="#fff" stroke="#111" /><circle cx="11.500" cy="11.500" r="1" stroke="#111" /></>],
  ["显示约束", <><path d="M1.500 1v6M14.500 1v6M1 3h14M1 12h6" /><path d="M9 9.500h6v5H9zM10.500 9V7h3v2" fill="#bbb" /></>],
];

function Canvas() {
  return (
    <main className="flex min-w-0 flex-1 border-t-2 border-l border-[#666]">
      <div className="flex min-w-0 flex-1 flex-col">
        <div className="relative flex-1 overflow-hidden bg-[#c0c0c0]">
          <Drawing />
          <div className="absolute top-[6px] right-[3px] flex items-center gap-1 text-[#333]">
            <Icon className="size-[14px]"><path d="M1.500 9.500h13v3h-13z" fill="#fff" /></Icon>
            <Icon className="size-[14px]"><path d="M4.500 1.500h10v10h-10z" fill="#fff" /><path d="M1.500 4.500h10v10h-10zM5 8h3v3H5z" fill="#fff" /></Icon>
            <Icon className="size-[14px]"><path d="M2 1.500h4l2 3 2-3h4L10.500 8l3.500 6.500h-4l-2-3-2 3H2L5.500 8z" fill="#fff" /></Icon>
          </div>
          <TypeDialog />
        </div>
        <div className="flex h-5 items-center border-t border-white bg-[#f0f0f0] pb-[3px]">
          <button className="ml-[21px] w-[58px] text-left font-['DejaVu_Sans_Mono'] text-[10px]" type="button">1 : 100</button>
          <div className="flex items-center gap-[5px] text-[#444]">
            {viewIcons.map(([label, icon]) => (
              <button aria-label={label} key={label} type="button"><Icon>{icon}</Icon></button>
            ))}
            <ChevronLeft aria-hidden="true" className="size-3" strokeWidth={4} />
          </div>
          <div className="ml-auto h-[15px] w-[17px] bg-[#cdcdcd]" />
          <ChevronRight aria-hidden="true" className="mr-[2px] ml-[555px] size-3 text-[#444]" strokeWidth={4} />
        </div>
      </div>
      <div className="flex w-[19px] flex-col items-center border-l border-white bg-[#f0f0f0] py-1 text-[#444]">
        <ChevronUp aria-hidden="true" className="size-3" strokeWidth={4} />
        <div className="mt-[409px] h-[17px] w-full bg-[#cdcdcd]" />
        <ChevronDown aria-hidden="true" className="mt-auto mb-[17px] size-3" strokeWidth={4} />
      </div>
    </main>
  );
}

// CJK caption followed by its accelerator key in the fixed-width face
function Caption({ text, keys }: { text: string; keys: string }) {
  return <>{text}<span className="font-['DejaVu_Sans_Mono'] text-[10px]">{keys}</span></>;
}

const dialogButton = "h-[21px] border border-[#adadad] bg-[#e1e1e1] leading-4 disabled:border-[#bfbfbf] disabled:bg-[#ccc] disabled:text-[#8a8a8a]";
const dialogSelect = "h-5 w-full appearance-none border border-[#adadad] bg-[#e1e1e1] pl-[3px]";
const options = ["剖面线末端 1", "剖面线末端 : 填充", "剖面线末端 : 空心", "剖面详图绘制标头", "另存"];

function TypeDialog() {
  return (
    <section
      aria-label="类型属性"
      className="absolute top-[15px] left-[87px] flex h-[787px] w-[478px] flex-col border border-[#2f78b7] bg-[#f0f0f0] text-xs text-black shadow-[2px_6px_16px_rgba(0,0,0,0.55)]"
      role="dialog"
    >
      <div className="flex h-[30px] items-center justify-between bg-white pr-[7px] pl-2">
        <h2>类型属性</h2>
        <button aria-label="关闭" type="button"><X aria-hidden="true" className="size-4" strokeWidth={1.5} /></button>
      </div>
      <div className="flex flex-1 flex-col pt-[11px] pr-[13px] pb-[11px] pl-[21px]">
        <div className="grid grid-cols-[69px_267px_106px] gap-y-2">
          <label className="flex h-5 items-center" htmlFor="family"><span><Caption keys="(F):" text="族" /></span></label>
          <div className="relative w-[254px]">
            <select className={dialogSelect} id="family"><option>系统族:剖面标记</option></select>
            <ChevronDown aria-hidden="true" className="pointer-events-none absolute top-1 right-[3px] size-3 text-[#555]" />
          </div>
          <button className={dialogButton} disabled type="button"><Caption keys="(L)..." text="载入" /></button>
          <label className="flex h-5 items-center" htmlFor="type"><span><Caption keys="(T):" text="类型" /></span></label>
          <div className="relative w-[254px]">
            <select className={dialogSelect} id="type"><option>剖面标头 1，剖面线末端 1</option></select>
            <ChevronDown aria-hidden="true" className="pointer-events-none absolute top-1 right-[3px] size-3 text-[#555]" />
          </div>
          <button className={dialogButton} type="button"><Caption keys="(D)..." text="复制" /></button>
          <button className={`${dialogButton} col-start-3`} type="button"><Caption keys="(R)..." text="重命名" /></button>
        </div>
        <h3 className="mt-[5px] mb-[3px] leading-4">类型参数</h3>
        <div className="flex-1 border-t-2 border-r border-b border-l-2 border-[#666] border-r-[#ddd] border-b-[#ddd] bg-white">
          <table className="w-[437px] table-fixed border-separate border-spacing-0">
            <colgroup><col className="w-[212px]" /><col className="w-[213px]" /><col className="w-3" /></colgroup>
            <thead>
              <tr className="bg-[#f0f0f0]">
                <th className="h-6 border-r border-b border-black p-0 font-normal" scope="col">参数</th>
                <th className="h-6 border-r border-b border-black p-0 font-normal" scope="col">值</th>
                <th className="h-6 border-r border-b border-black p-0 font-normal" scope="col">=</th>
              </tr>
              <tr><td className="h-[3px] p-0" colSpan={3} /></tr>
            </thead>
            <tbody>
              <tr className="bg-[#98b1d3]">
                <th className="h-[22px] p-0 pl-[2px] text-left font-bold" colSpan={2} scope="colgroup">图形</th>
                <td className="p-0"><ChevronsUp aria-hidden="true" className="-ml-[3px] size-3" strokeWidth={3} /></td>
              </tr>
              <tr>
                <th className="h-5 border-r border-b border-dotted border-[#777] p-0 pl-[2px] text-left leading-4 font-normal" scope="row">剖面标头</th>
                <td className="relative h-5 border-r border-b border-dotted border-[#777] p-0">
                  <div className="flex h-[19px] items-center justify-between pr-[2px] pl-[2px]">
                    <input aria-label="剖面标头" className="h-[18px] w-6 bg-[#0078d7] text-white outline-none" defaultValue="另存" />
                    <button aria-label="展开" className="flex h-[18px] w-[15px] items-center justify-center border border-r-2 border-b-2 border-[#999] bg-[#e1e1e1]" type="button">
                      <ChevronDown aria-hidden="true" className="size-3" />
                    </button>
                  </div>
                  <div className="absolute top-[19px] left-0 z-10 flex h-[100px] w-[212px] border border-black bg-white">
                    <ul className="flex-1 pt-px" role="listbox">
                      {options.map((option) => (
                        <li
                          aria-selected={option === "另存"}
                          className={option === "另存" ? "h-[17px] border border-dotted border-[#d78000] bg-[#0078d7] leading-[15px] text-white" : "h-[17px] leading-[17px]"}
                          key={option}
                          role="option"
                        >
                          {option}
                        </li>
                      ))}
                    </ul>
                    <div className="flex w-[17px] flex-col items-center bg-[#f0f0f0] py-[3px] text-[#555]">
                      <ChevronUp aria-hidden="true" className="size-3" strokeWidth={4} />
                      <div className="mt-[34px] h-8 w-[15px] bg-[#cdcdcd]" />
                      <ChevronDown aria-hidden="true" className="mt-auto size-3" strokeWidth={4} />
                    </div>
                    <svg aria-hidden="true" className="absolute top-8 left-[97px] h-[21px] w-[14px]" viewBox="0 0 14 21">
                      <path d="M1 1v15l3.500-3.500L7 19l3-1-2.500-6H13z" fill="#fff" stroke="#000" />
                    </svg>
                  </div>
                </td>
                <td className="border-r border-b border-dotted border-[#777] p-0" />
              </tr>
              {["剖面线末端", "断开剖面显示样式"].map((label) => (
                <tr key={label}>
                  <th className="h-5 border-r border-b border-dotted border-[#777] p-0 pl-[2px] text-left leading-4 font-normal" scope="row">{label}</th>
                  <td className="border-r border-b border-dotted border-[#777] p-0" />
                  <td className="border-r border-b border-dotted border-[#777] p-0" />
                </tr>
              ))}
            </tbody>
          </table>
        </div>
        <div className="mt-[26px] flex justify-end gap-2">
          <button className={`${dialogButton} mr-auto w-[88px]`} disabled type="button"><span className="font-['DejaVu_Sans_Mono'] text-[10px]">&lt;&lt; </span><Caption keys="(P)" text="预览" /></button>
          <button className={`${dialogButton} w-[88px]`} type="button">确定</button>
          <button className={`${dialogButton} w-[88px]`} type="button">取消</button>
          <button className={`${dialogButton} w-[88px]`} disabled type="button">应用</button>
        </div>
      </div>
      <Icon className="absolute right-px bottom-px size-3 text-[#bbb]" box={12}>
        <path d="M9 2h2M9 6h2M5 6h2M9 10h2M5 10h2M1 10h2" strokeWidth="2" />
      </Icon>
    </section>
  );
}

const statusIcons: [string, ReactNode][] = [
  ["选择链接", <><path d="M0 4c0-3 5-4 8-2 3-2 8-1 8 2s-4 3-6 3v8l-3-1V7C4 7 0 7 0 4z" /><path d="M12 7v6l2-1 1 3" fill="none" stroke="#fff" /></>],
  ["选择基线图元", <><path d="M0 13l4-7 8-5v13z" /><path d="M15 2v5l-2 2 2 5" fill="none" stroke="#fff" strokeDasharray="2 1" /></>],
  ["选择锁定图元", <><path d="M4 1h6l1 7 4 4-4 1v2H8v-5H0l4-3z" /><path d="M11 10v4l2-1 2 3" fill="none" stroke="#fff" /></>],
  ["按面选择", <><path d="M1 2h8l1 7 4 4v1H1z" /><path d="M11 8v6l4-1" fill="none" stroke="#fff" /></>],
  ["选择时拖拽", <><path d="M4 0v9M0 4h9M4 0l-1 2M9 4L7 3" fill="none" stroke="currentColor" /><path d="M8 5v9l2-2 2 4 1-1-1-3h3z" fill="#eee" stroke="currentColor" /></>],
  ["后台进程", <circle cx="8" cy="8" fill="none" r="5" stroke="currentColor" strokeDasharray="2 1" strokeWidth="3" />],
];

function StatusBar() {
  return (
    <footer className="flex h-6 items-center border-t border-[#888] bg-[#d4d4d4] pt-px text-xs">
      <p className="flex-1 pl-[3px]">就绪</p>
      <div className="flex items-center text-[#909090]">
        <Icon className="mr-2 size-4"><path d="M5 1h5v4H5zM1 7h5v8H1zM8 6h3v9H8zM12 6h3v9h-3z" fill="#999" /></Icon>
        <div className="relative">
          <select aria-label="工作集" className="h-[17px] w-[204px] appearance-none bg-white" />
          <ChevronDown aria-hidden="true" className="pointer-events-none absolute top-1 right-[2px] size-3" />
        </div>
        <Icon className="ml-2 size-4"><path d="M5 1h9v4l-4 1-2 4v5H1l4-7z" fill="#aaa" /></Icon>
        <span className="ml-[6px] w-8 text-black">:0</span>
        <Icon className="mr-[10px] size-4"><path d="M0 1h15v14H0z" fill="#999" stroke="none" /></Icon>
        <Icon className="mr-2 size-4"><path d="M3 1h12v14H0l4-5z" fill="#999" stroke="none" /><path d="M3 8h7m-3-3l3 3-3 3" stroke="#fff" /></Icon>
        <div className="relative">
          <select aria-label="设计选项" className="h-[17px] w-[204px] appearance-none bg-white pl-[2px] text-[#555]">
            <option>主模型</option>
          </select>
          <ChevronDown aria-hidden="true" className="pointer-events-none absolute top-1 right-[2px] size-3" />
        </div>
      </div>
      <div className="flex w-[425px] items-center justify-end gap-[10px] pr-[66px] text-[#999]">
        {statusIcons.map(([label, icon]) => (
          <button aria-label={label} key={label} type="button">
            <Icon><g fill="currentColor" stroke="none">{icon}</g></Icon>
          </button>
        ))}
        <button className="flex items-center text-black" type="button">
          <Icon><path d="M1 2h14v2l-5 5v6l-4-2V9L1 4z" fill="#ddd" stroke="#444" /></Icon>
          :1
        </button>
      </div>
    </footer>
  );
}

function RecordingFrame() {
  return (
    <div aria-hidden="true" className="pointer-events-none absolute top-1 right-[7px] bottom-[18px] left-[7px] z-20 border border-[#e05a5a]">
      <span className="absolute -top-1 -left-1 size-6 border-t-4 border-l-4 border-[#f00a0a]" />
      <span className="absolute -top-1 -right-1 size-6 border-t-4 border-r-4 border-[#f00a0a]" />
      <span className="absolute -bottom-1 -left-1 size-6 border-b-4 border-l-4 border-[#f00a0a]" />
      <span className="absolute -right-1 -bottom-1 size-6 border-r-4 border-b-4 border-[#f00a0a]" />
      <span className="absolute -top-[5px] left-1/2 flex h-1 w-[60px] -translate-x-1/2 flex-col justify-center bg-[#f02020]">
        <span className="mx-[3px] border-t-2 border-dotted border-[#f8b0b0]" />
      </span>
    </div>
  );
}

export default function App() {
  return (
    <div className="relative flex h-screen flex-col overflow-hidden bg-[#f0f0f0] font-['Open_Sans','Noto_Sans_CJK_SC',sans-serif]">
      <TitleBar />
      <Tabs />
      <Ribbon />
      <p className="flex h-6 items-center bg-[#e4efd9] pt-[3px] pl-[10px] text-xs text-[#999]">修改 | 视图</p>
      <div className="flex min-h-0 flex-1">
        <Properties />
        <Browser />
        <Canvas />
      </div>
      <StatusBar />
      <RecordingFrame />
    </div>
  );
}
